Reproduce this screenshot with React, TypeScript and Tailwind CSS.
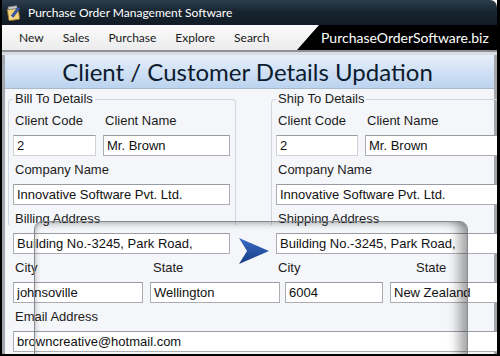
import React from "react";

const label = "h-[28px] flex items-center pl-[2px] text-[13px] text-[#1c1c1c] whitespace-nowrap";
const box =
  "block h-[21px] border border-[#abadb3] border-t-[#9a9ca3] bg-white pl-[3px] text-[13px] text-[#111] outline-none";

function Field({ value, w, gray }: { value: string; w: string; gray?: boolean }) {
  return (
    <input
      readOnly
      value={value}
      className={`${box} ${w} relative z-10 ${gray ? "bg-[#f0f0f0] border-[#d0d2d6]" : ""}`}
    />
  );
}

function AppIcon() {
  return (
    <svg width="16" height="17" viewBox="0 0 16 17">
      <rect x="2" y="4" width="11" height="12" rx="1" fill="#f2d27a" stroke="#8a6a20" strokeWidth="0.8" transform="rotate(-8 8 10)" />
      <rect x="3" y="2" width="9" height="3" fill="#c8c8c8" stroke="#555" strokeWidth="0.6" transform="rotate(-8 8 10)" />
      <path d="M5 12 L12 3 L14 4.5 L7 13.5 Z" fill="#3a5fb0" stroke="#1d2f66" strokeWidth="0.6" />
      <path d="M5 12 L4.3 14.2 L7 13.5 Z" fill="#eee" />
    </svg>
  );
}

export default function App() {
  return (
    <div className="w-[500px] h-[356px] bg-white overflow-hidden font-['Liberation_Sans',Arial,sans-serif]">
      <div className="relative w-full h-full flex flex-col border-l-2 border-r-[3px] border-b-[2px] border-black overflow-hidden">
        {/* title bar */}
        <div className="h-[25px] shrink-0 flex items-center gap-[6px] pl-[4px] rounded-tr-[7px] bg-gradient-to-b from-[#2c3d4d] via-[#17242f] to-[#111c26]">
          <AppIcon />
          <span className="text-white text-[12px] font-['Lato',sans-serif]">
            Purchase Order Management Software
          </span>
        </div>

        {/* menu bar */}
        <div className="h-[25px] shrink-0 flex items-center bg-gradient-to-b from-[#fbfbfb] to-[#ececec]">
          <div className="flex gap-[19px] pl-[17px] text-[12px] text-[#1a1a1a] font-['Lato',sans-serif]">
            <span>New</span>
            <span>Sales</span>
            <span>Purchase</span>
            <span>Explore</span>
            <span>Search</span>
          </div>
          <div className="ml-auto h-full w-[200px] bg-black flex items-center pl-[24px] [clip-path:polygon(22px_0,100%_0,100%_100%,0_100%)]">
            <span className="text-white text-[14px] font-['Lato',sans-serif] whitespace-nowrap">
              PurchaseOrderSoftware.biz
            </span>
          </div>
        </div>

        <div className="h-[5px] shrink-0 border-t-2 border-[#8e9194] bg-[#dadde1]" />

        {/* window body */}
        <div className="flex-1 flex flex-col border-l-[3px] border-r-[3px] border-[#a3a7ad] bg-[#f4f6f9]">
          <div className="h-[34px] shrink-0 flex items-center justify-center border-b border-[#a9bacb] bg-gradient-to-b from-[#e6effa] to-[#bbd3ef]">
            <span className="text-[24px] text-[#0d1b2e] font-['Lato',sans-serif] pr-[4px]">
              Client / Customer Details Updation
            </span>
          </div>

          <div className="flex pl-[3px] pt-[2px]">
            {/* bill to */}
            <fieldset className="w-[228px] min-w-0 h-[134px] shrink-0 border border-b-0 border-[#cfd6df] rounded-t-[4px] pl-[4px]">
              <legend className="px-[2px] text-[13px] leading-[16px] text-[#1c1c1c]">Bill To Details</legend>
              <div className="flex gap-[7px]">
                <div className="flex flex-col w-[83px]">
                  <div className={`${label} h-[27px]`}>Client Code</div>
                  <Field value="2" w="w-[83px]" gray />
                </div>
                <div className="flex flex-col">
                  <div className={`${label} h-[27px]`}>Client Name</div>
                  <Field value="Mr. Brown" w="w-[127px]" />
                </div>
              </div>
              <div className={label}>Company Name</div>
              <Field value="Innovative Software Pvt. Ltd." w="w-[217px]" />
              <div className={label}>Billing Address</div>
              <Field value="Building No.-3245, Park Road," w="w-[217px]" />
              <div className="flex gap-[7px]">
                <div className="flex flex-col w-[130px] shrink-0">
                  <div className={label}>City</div>
                  <Field value="johnsoville" w="w-[130px]" />
                </div>
                <div className="flex flex-col w-[130px] shrink-0">
                  <div className={`${label} pl-[3px]`}>State</div>
                  <Field value="Wellington" w="w-[130px]" />
                </div>
              </div>
              <div className={label}>Email Address</div>
              <Field value="browncreative@hotmail.com" w="w-[490px] shrink-0" />
            </fieldset>

            {/* ship to */}
            <fieldset className="w-[260px] min-w-0 h-[134px] shrink-0 ml-[35px] border border-b-0 border-[#cfd6df] rounded-t-[4px] pl-[4px]">
              <legend className="px-[2px] text-[13px] leading-[16px] text-[#1c1c1c]">Ship To Details</legend>
              <div className="flex gap-[7px]">
                <div className="flex flex-col w-[82px]">
                  <div className={`${label} h-[27px]`}>Client Code</div>
                  <Field value="2" w="w-[82px]" gray />
                </div>
                <div className="flex flex-col">
                  <div className={`${label} h-[27px]`}>Client Name</div>
                  <Field value="Mr. Brown" w="w-[150px]" />
                </div>
              </div>
              <div className={label}>Company Name</div>
              <Field value="Innovative Software Pvt. Ltd." w="w-[250px]" />
              <div className={label}>Shipping Address</div>
              <Field value="Building No.-3245, Park Road," w="w-[250px]" />
              <div className="flex">
                <div className={`${label} w-[138px]`}>City</div>
                <div className={label}>State</div>
              </div>
              <div className="flex gap-[7px] pl-[9px]">
                <Field value="6004" w="w-[98px] shrink-0" />
                <Field value="New Zealand" w="w-[130px] shrink-0" />
              </div>
            </fieldset>
          </div>
        </div>

        {/* magnifier overlay */}
        <div className="absolute left-[32px] top-[221px] w-[434px] h-[150px] z-20 pointer-events-none rounded-t-[8px] border border-[#868b92] shadow-[inset_-16px_0_12px_-8px_rgba(0,0,0,0.35),inset_0_7px_6px_-5px_rgba(0,0,0,0.25),inset_5px_0_5px_-4px_rgba(0,0,0,0.2)]" />

        {/* arrow */}
        <svg className="absolute left-[236px] top-[237px] z-30" width="32" height="28" viewBox="0 0 32 28">
          <defs>
            <linearGradient id="arr" x1="0" y1="0" x2="0" y2="1">
              <stop offset="0" stopColor="#3a6cc4" />
              <stop offset="1" stopColor="#163c86" />
            </linearGradient>
          </defs>
          <path d="M1 1 L31 14 L1 27 L9 14 Z" fill="url(#arr)" />
        </svg>
      </div>
    </div>
  );
}
